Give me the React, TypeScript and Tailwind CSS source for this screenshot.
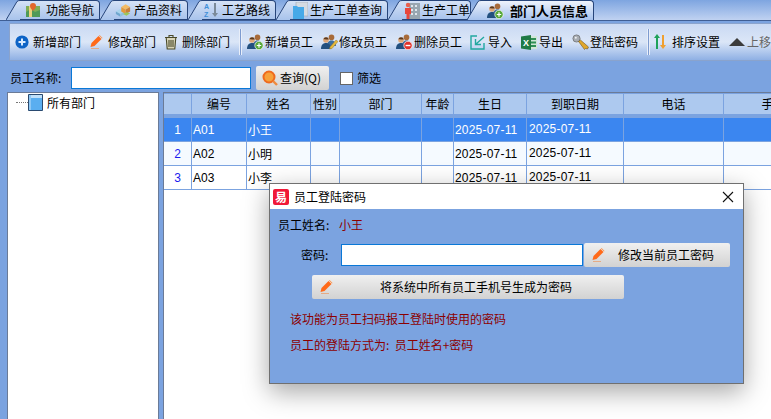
import type { ReactNode } from 'react';

const cjk = { fontFamily: '"Noto Sans CJK SC", sans-serif' };

function MapIcon() {
  return (
    <svg width="16" height="16" viewBox="0 0 16 16">
      <path d="M1 4h14v11H1z" fill="#7fae55" />
      <path d="M1 10l5-3 4 3 5-2v7H1z" fill="#4f9a57" />
      <path d="M4 4h3v11H4z" fill="#e9d27c" />
      <path d="M8 1a3 3 0 0 1 3 3c0 2-3 5-3 5S5 6 5 4a3 3 0 0 1 3-3z" fill="#e2672c" />
    </svg>
  );
}

function BoxIcon() {
  return (
    <svg width="16" height="15" viewBox="0 0 18 16" className="-ml-[3px]">
      <path d="M1 9l5-3 5 3-5 3z" fill="#a9d3ec" />
      <path d="M1 9v3l5 3v-3z" fill="#6fa7cf" />
      <path d="M6 12v3l5-3V9z" fill="#8fc1e0" />
      <path d="M7 4l5-3 5 3-5 3z" fill="#f4bb63" />
      <path d="M7 4v5l5 3V7z" fill="#e59a3a" />
      <path d="M12 7v5l5-3V4z" fill="#c9803a" />
      <path d="M9 12l4-2 4 1-4 3z" fill="#9bc75b" />
    </svg>
  );
}

function SortIcon() {
  return (
    <svg width="16" height="16" viewBox="0 0 16 16">
      <text x="0" y="7" fontSize="7" fontWeight="700" fill="#3f8fd8" fontFamily="Liberation Sans">A</text>
      <text x="0" y="15" fontSize="7" fontWeight="700" fill="#3f8fd8" fontFamily="Liberation Sans">Z</text>
      <path d="M10 1h2v10h2l-3 4-3-4h2z" fill="#7b8a99" />
    </svg>
  );
}

function DocIcon() {
  return (
    <svg width="15" height="17" viewBox="0 0 15 17">
      <path d="M3 0h12v14H3z" fill="#d5dbe2" stroke="#9aa5b1" strokeWidth=".6" />
      <path d="M0 4h4l1 1h6v12H0z" fill="#47a9e8" />
    </svg>
  );
}

function BuildingIcon() {
  return (
    <svg width="16" height="17" viewBox="0 0 16 17">
      <path d="M5 1h11v16H5z" fill="#98a6b0" />
      <path d="M7 3h2v2H7zM11 3h2v2h-2zM7 7h2v2H7zM11 7h2v2h-2zM7 11h2v2H7zM11 11h2v2h-2z" fill="#dfe6ec" />
      <circle cx="4" cy="3" r="2.2" fill="#e8604c" />
      <path d="M1 6h6v6H5.5v5h-3v-5H1z" fill="#e8473c" />
    </svg>
  );
}

function PeopleBase({ badge }: { badge?: ReactNode }) {
  return (
    <svg width="17" height="16" viewBox="0 0 17 16">
      <circle cx="10.5" cy="3.4" r="2.8" fill="#a86b3a" />
      <path d="M6 12c0-4 2-5.5 4.5-5.5S15 8 15 12z" fill="#3f6f9e" />
      <circle cx="5" cy="6" r="2.8" fill="#e0a878" />
      <path d="M5 3.2a2.8 2.8 0 0 1 2.8 2.4C6 5.6 4 5 2.4 5.2A2.8 2.8 0 0 1 5 3.2z" fill="#5a3a20" />
      <path d="M0 15c0-4 2-6 5-6s5 2 5 6z" fill="#23507f" />
      {badge}
    </svg>
  );
}

function AddUserIcon() {
  return (
    <PeopleBase
      badge={
        <>
          <circle cx="12" cy="11.5" r="4.2" fill="#58a83a" stroke="#fff" strokeWidth=".7" />
          <path d="M9.8 10.9h1.6V9.3h1.2v1.6h1.6v1.2h-1.6v1.6h-1.2v-1.6H9.8z" fill="#fff" />
        </>
      }
    />
  );
}

function EditUserIcon() {
  return (
    <PeopleBase badge={<path d="M9 13l6-7 2 1.5-6 7-2.5 .5z" fill="#e6b93c" stroke="#8a6a1c" strokeWidth=".4" />} />
  );
}

function DeleteUserIcon() {
  return (
    <PeopleBase
      badge={
        <>
          <circle cx="12" cy="11.5" r="4.2" fill="#e0332c" stroke="#fff" strokeWidth=".7" />
          <path d="M9.6 10.8h4.8v1.4H9.6z" fill="#fff" />
        </>
      }
    />
  );
}

function PlusIcon() {
  return (
    <svg width="14" height="14" viewBox="0 0 14 14">
      <circle cx="7" cy="7" r="6.6" fill="#0d63c6" />
      <path d="M6 3.5h2V6h2.5v2H8v2.5H6V8H3.5V6H6z" fill="#d9ebff" />
    </svg>
  );
}

function PencilIcon() {
  return (
    <svg width="13" height="14" viewBox="0 0 13 14">
      <path d="M0.5 12l1-4L8.5 1l3 3L4.5 11z" fill="#ff6a1a" />
      <path d="M9 .5l.5-.5 3 3-.5 .5z" fill="#ff8a3a" />
      <path d="M1 13.5h8" stroke="#e8a070" strokeWidth=".8" />
    </svg>
  );
}

function TrashIcon() {
  return (
    <svg width="14" height="16" viewBox="0 0 14 16" fill="none" stroke="#4a4a28" strokeWidth="1.1">
      <path d="M1 3.5h12M5 3.5V1.5h4v2" />
      <path d="M2.2 3.5l1 11.5h7.6l1-11.5z" fill="#d8d4b8" />
      <path d="M5 6v7M7 6v7M9 6v7" />
    </svg>
  );
}

function ImportIcon() {
  return (
    <svg width="16" height="15" viewBox="0 0 16 15" fill="none" stroke="#22a8a0" strokeWidth="1.4">
      <path d="M7 1H1v13h13V8" />
      <path d="M14 2L6 9M5.5 4v5.5H11" />
    </svg>
  );
}

function ExcelIcon() {
  return (
    <svg width="16" height="15" viewBox="0 0 16 15">
      <path d="M8 1h8v13H8z" fill="#cfe6d6" />
      <path d="M10 3h5v2h-5zM10 6.5h5v2h-5zM10 10h5v2h-5z" fill="#2f8f55" />
      <path d="M0 1.5L10 0v15L0 13.5z" fill="#1f7a45" />
      <text x="2" y="11" fontSize="9" fontWeight="700" fill="#fff" fontFamily="Liberation Sans">X</text>
    </svg>
  );
}

function KeyIcon() {
  return (
    <svg width="17" height="17" viewBox="0 0 17 17">
      <circle cx="4.5" cy="4.5" r="3.6" fill="#a8adb3" stroke="#555" strokeWidth=".6" />
      <circle cx="3.8" cy="3.8" r="1" fill="#eef0f2" />
      <path d="M6.5 7.5l2-1.5 8 7-1 2-2-.5-1 1-1.5-2z" fill="#e0a72c" stroke="#5a4412" strokeWidth=".5" />
    </svg>
  );
}

function OrderIcon() {
  return (
    <svg width="12" height="16" viewBox="0 0 12 16">
      <path d="M3 0L0 4h2v11h2V4h2z" fill="#1fa25a" />
      <path d="M8 1h2v10h2l-3 4-3-4h2z" fill="#f0a030" />
    </svg>
  );
}

function UpIcon() {
  return (
    <svg width="16" height="8" viewBox="0 0 16 8">
      <path d="M8 0l8 8H0z" fill="#3c3c3c" />
    </svg>
  );
}

function SearchIcon() {
  return (
    <svg width="16" height="16" viewBox="0 0 16 16">
      <circle cx="7" cy="7" r="5.5" fill="#f7a13a" stroke="#ee6a1e" strokeWidth="2" />
      <path d="M11 11l4 4" stroke="#ee8a3e" strokeWidth="2.4" />
    </svg>
  );
}

function TreeBookIcon() {
  return (
    <svg width="15" height="17" viewBox="0 0 15 17">
      <path d="M.5 .5h14v16H.5z" fill="#5aaef0" stroke="#2a4a70" />
      <path d="M1 1h13v3H1z" fill="#bfe0fa" />
      <path d="M1 1h2v15H1z" fill="#8fc8f5" />
    </svg>
  );
}

function Tab({ icon, label, active, width, iconBox }: { icon: ReactNode; label: string; active?: boolean; width: string; iconBox: string }) {
  return (
    <div className={`relative flex h-[20px] shrink-0 items-center ${width} ${active ? 'z-10' : ''}`}>
      <svg width="14" height="20" viewBox="0 0 14 20" className="shrink-0">
        <defs>
          <linearGradient id={active ? 'ta' : 'ti'} x1="0" y1="0" x2="0" y2="1">
            <stop offset="0" stopColor={active ? '#eef3fc' : '#d5e2f6'} />
            <stop offset="1" stopColor={active ? '#a6c2ed' : '#a8c3ec'} />
          </linearGradient>
        </defs>
        <path d="M0 20L11 1.5Q12 .5 14 .5V20z" fill={`url(#${active ? 'ta' : 'ti'})`} />
        <path d="M0 20L11 1.5Q12 .5 14 .5" fill="none" stroke="#27457a" strokeWidth="1" />
      </svg>
      <div
        className={`flex h-[20px] flex-1 items-center rounded-tr-[4px] border-t border-r border-[#27457a] ${
          active ? 'bg-gradient-to-b from-[#eef3fc] to-[#a6c2ed]' : 'border-b bg-gradient-to-b from-[#d5e2f6] to-[#a8c3ec]'
        }`}
      >
        <span className={`flex shrink-0 justify-center ${iconBox}`}>{icon}</span>
        <span className={`whitespace-nowrap leading-none text-black ${active ? 'text-[13px] font-bold' : 'text-[12px]'}`}>{label}</span>
      </div>
    </div>
  );
}

function ToolItem({ icon, label, width, gray }: { icon: ReactNode; label: string; width: string; gray?: boolean }) {
  return (
    <div className={`flex h-full shrink-0 items-center ${width}`}>
      <span className="flex w-[18px] shrink-0">{icon}</span>
      <span className={`whitespace-nowrap text-[12px] ${gray ? 'text-[#666]' : 'text-black'}`}>{label}</span>
    </div>
  );
}

function ToolSep() {
  return <div className="mx-[3px] h-[26px] w-[3px] shrink-0 border-x border-x-[#e8eef9] bg-[#7d9bd0]" />;
}

const columns = [
  { w: 'w-[28px]', name: '' },
  { w: 'w-[55px]', name: '编号' },
  { w: 'w-[64px]', name: '姓名' },
  { w: 'w-[29px]', name: '性别' },
  { w: 'w-[82px]', name: '部门' },
  { w: 'w-[32px]', name: '年龄' },
  { w: 'w-[73px]', name: '生日' },
  { w: 'w-[97px]', name: '到职日期' },
  { w: 'w-[100px]', name: '电话' },
  { w: 'w-[100px]', name: '手机' },
];

const rows = [
  { no: '1', code: 'A01', name: '小王' },
  { no: '2', code: 'A02', name: '小明' },
  { no: '3', code: 'A03', name: '小李' },
];

export default function App() {
  return (
    <div className="relative h-[419px] w-[771px] overflow-hidden bg-[#7ba3e0] text-[12px] text-black" style={cjk}>
      {/* 顶部标签 */}
      <div className="flex h-[21px] items-start border-b border-[#3f5f95] bg-gradient-to-b from-[#7ea5e0] to-[#c0d2f1] pl-[6px]">
        <Tab width="w-[94px]" iconBox="w-[26px]" icon={<MapIcon />} label="功能导航" />
        <Tab width="w-[88px]" iconBox="w-[20px]" icon={<BoxIcon />} label="产品资料" />
        <Tab width="w-[88px]" iconBox="w-[20px]" icon={<SortIcon />} label="工艺路线" />
        <Tab width="w-[112px]" iconBox="w-[20px]" icon={<DocIcon />} label="生产工单查询" />
        <Tab width="w-[79px]" iconBox="w-[20px]" icon={<BuildingIcon />} label="生产工单" />
        <Tab width="w-[127px]" iconBox="w-[29px]" active icon={<AddUserIcon />} label="部门人员信息" />
      </div>

      {/* 工具栏 */}
      <div className="ml-[9px] mt-[2px] flex h-[38px] items-center border border-r-0 border-[#8aa3cc] bg-gradient-to-b from-[#c9d9f3] via-[#dbe6f7] to-[#8fb0e4] pl-[5px]">
        <ToolItem width="w-[75px]" icon={<PlusIcon />} label="新增部门" />
        <ToolItem width="w-[74px]" icon={<PencilIcon />} label="修改部门" />
        <ToolItem width="w-[72px]" icon={<TrashIcon />} label="删除部门" />
        <ToolSep />
        <ToolItem width="w-[74px] ml-[2px]" icon={<AddUserIcon />} label="新增员工" />
        <ToolItem width="w-[75px]" icon={<EditUserIcon />} label="修改员工" />
        <ToolItem width="w-[74px]" icon={<DeleteUserIcon />} label="删除员工" />
        <ToolItem width="w-[51px]" icon={<ImportIcon />} label="导入" />
        <ToolItem width="w-[51px]" icon={<ExcelIcon />} label="导出" />
        <ToolItem width="w-[72px]" icon={<KeyIcon />} label="登陆密码" />
        <ToolSep />
        <ToolItem width="w-[75px] ml-[1px]" icon={<OrderIcon />} label="排序设置" />
        <ToolItem width="w-[42px]" gray icon={<UpIcon />} label="上移" />
      </div>

      {/* 查询 */}
      <div className="flex h-[31px] items-center pl-[10px] pt-[3px]">
        <span className="w-[61px]">员工名称:</span>
        <input className="h-[22px] w-[180px] border border-[#0a78d7] bg-white" />
        <button className="ml-[5px] flex h-[24px] w-[73px] items-center rounded-[2px] bg-gradient-to-b from-[#f0f0f0] to-[#d2d2d2] pl-[6px]">
          <SearchIcon />
          <span className="ml-[2px] whitespace-nowrap">查询(Q)</span>
        </button>
        <span className="ml-[11px] h-[13px] w-[13px] border border-[#666] bg-white" />
        <span className="ml-[4px]">筛选</span>
      </div>

      {/* 主体 */}
      <div className="flex h-[329px] pl-[7px]">
        <div className="w-[152px] shrink-0 border border-b-0 border-[#6b7b97] bg-white pl-[8px] pt-[1px]">
          <div className="flex items-center">
            <span className="w-[12px] border-t border-dotted border-[#777]" />
            <TreeBookIcon />
            <span className="ml-[4px] leading-[17px]">所有部门</span>
          </div>
        </div>
        <div className="ml-[4px] flex-1 overflow-hidden border-l border-t border-[#6b7b97] bg-white">
          <div className="flex h-[21px] border-t border-[#7ba3e0] bg-[#adc9ef]">
            {columns.map((c) => (
              <div key={c.name} className={`flex shrink-0 items-center justify-center border-r border-[#7ba3e0] ${c.w}`}>
                <span className="whitespace-nowrap">{c.name}</span>
              </div>
            ))}
          </div>
          <div className="h-[4px] bg-[#7ba3e0]" />
          {rows.map((r, i) => (
            <div
              key={r.no}
              className={`flex h-[24px] border-b border-[#7ba3e0] ${
                i === 0 ? 'bg-[#3b86f0] text-white' : i === 1 ? 'bg-[#f5faff]' : 'bg-white'
              }`}
            >
              {columns.map((c, j) => (
                <div key={c.name} className={`flex shrink-0 items-center whitespace-nowrap border-r border-[#7ba3e0] ${c.w} ${j === 0 ? `justify-center ${i === 0 ? '' : 'text-[#1a1aee]'}` : 'pl-[1px]'}`}>
                  {j === 0 && <span className="font-['Liberation_Sans']">{r.no}</span>}
                  {j === 1 && <span className="font-['Liberation_Sans']">{r.code}</span>}
                  {j === 2 && <span>{r.name}</span>}
                  {j === 6 && <span className="font-['Liberation_Sans'] tracking-[0.2px]">2025-07-11</span>}
                  {j === 7 && <span className="-mt-[2px] ml-[1px] font-['Liberation_Sans'] tracking-[0.2px]">2025-07-11</span>}
                </div>
              ))}
            </div>
          ))}
        </div>
      </div>

      {/* 弹窗 */}
      <div className="absolute left-[269px] top-[183px] h-[201px] w-[475px] border border-[#707070] bg-[#7ba3e0] shadow-[0_8px_24px_rgba(0,0,0,0.35)]">
        <div className="flex h-[25px] items-center bg-white pl-[3px]">
          <span className="flex h-[16px] w-[16px] items-center justify-center rounded-[2px] bg-[#f01838] text-[12px] font-bold leading-none text-white">易</span>
          <span className="ml-[5px]">员工登陆密码</span>
          <svg width="12" height="12" viewBox="0 0 12 12" className="ml-auto mr-[9px]" fill="none" stroke="#111" strokeWidth="1.1">
            <path d="M1 1l10 10M11 1L1 11" />
          </svg>
        </div>
        <div className="flex h-[32px] items-center pl-[8px]">
          <span className="w-[61px]">员工姓名:</span>
          <span className="text-[#8b0000]">小王</span>
        </div>
        <div className="mt-[2px] flex h-[24px] items-center pl-[31px]">
          <span className="w-[40px]">密码:</span>
          <input className="h-[22px] w-[242px] border border-[#0a78d7] bg-white" />
          <button className="ml-[1px] flex h-[24px] w-[146px] items-center rounded-[2px] bg-gradient-to-b from-[#f0f0f0] to-[#d2d2d2] pl-[8px]">
            <PencilIcon />
            <span className="ml-[13px] whitespace-nowrap">修改当前员工密码</span>
          </button>
        </div>
        <div className="pl-[42px] pt-[8px]">
          <button className="relative flex h-[24px] w-[312px] items-center justify-center rounded-[2px] bg-gradient-to-b from-[#f0f0f0] to-[#d2d2d2] pl-[16px]">
            <span className="absolute left-[8px] top-[5px]">
              <PencilIcon />
            </span>
            <span className="whitespace-nowrap">将系统中所有员工手机号生成为密码</span>
          </button>
        </div>
        <p className="mt-[11px] pl-[20px] leading-[18px] text-[#8b0000]">该功能为员工扫码报工登陆时使用的密码</p>
        <p className="mt-[8px] pl-[20px] leading-[18px] text-[#8b0000]">员工的登陆方式为:&nbsp;&nbsp;员工姓名+密码</p>
      </div>
    </div>
  );
}
